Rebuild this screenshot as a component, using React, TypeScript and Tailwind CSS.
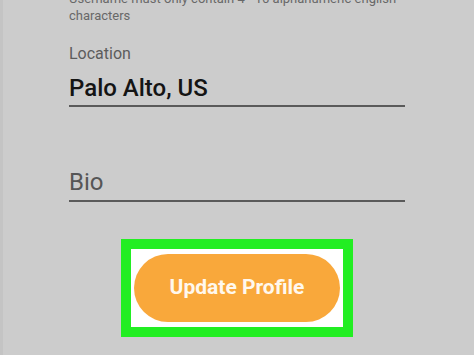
import React from "react";

const App = () => {
  return (
    <div
      className="h-[355px] w-[474px] overflow-hidden bg-[#cccccc] shadow-[inset_3px_0_0_#c4c4c4]"
      style={{ fontFamily: "Roboto, 'Noto Sans', sans-serif" }}
    >
      <div className="mx-auto flex w-[336px] flex-col">
        <div className="-mt-[10px] text-[13px] leading-[17px] text-[#686868]">
          Username must only contain 4 - 16 alphanumeric english characters
        </div>

        <div className="mt-[20px] text-[16px] leading-[20px] text-[#5c5c5c]">Location</div>
        <div className="mt-[8px] border-b-2 border-[#5a5a5a] pb-[1px] text-[24px] font-medium leading-[32px] text-[#141414]">
          Palo Alto, US
        </div>

        <div className="mt-[59px] border-b-2 border-[#5a5a5a] pb-[2px] text-[24px] leading-[32px] text-[#565656]">
          Bio
        </div>
      </div>

      <div className="mt-[37px] flex justify-center">
        <div className="border-[10px] border-[#22ee22] bg-white px-[3px] py-[5px]">
          <button
            type="button"
            className="flex h-[68px] w-[206px] items-center justify-center rounded-full bg-[#f9a83b] text-[21px] font-bold text-[#fff8ee]"
          >
            Update Profile
          </button>
        </div>
      </div>
    </div>
  );
};

export default App;
